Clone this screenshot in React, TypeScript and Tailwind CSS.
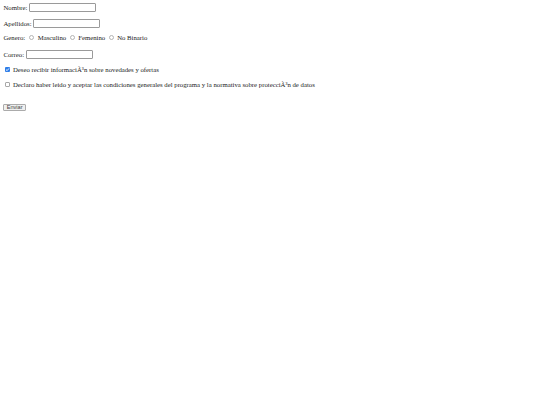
import React from "react";

const serif = { fontFamily: '"Liberation Serif", "Times New Roman", serif' };

function TextField() {
  return (
    <input
      type="text"
      className="h-[9px] w-[67px] rounded-[1px] border border-[#9a9a9a] bg-white px-[1px] outline-none"
    />
  );
}

function Radio() {
  return (
    <span className="mx-[2px] inline-block h-[5px] w-[5px] shrink-0 rounded-full border border-[#b4b4b4] bg-white" />
  );
}

function Check({ checked }: { checked?: boolean }) {
  if (checked) {
    return (
      <span className="ml-[2px] mr-[2.5px] flex h-[5px] w-[5px] shrink-0 items-center justify-center rounded-[1px] bg-[#2f7ee8]">
        <svg viewBox="0 0 10 10" className="h-[5px] w-[5px]">
          <path d="M2 5.2 L4.2 7.3 L8 2.8" fill="none" stroke="#fff" strokeWidth="1.8" />
        </svg>
      </span>
    );
  }
  return (
    <span className="ml-[2px] mr-[2.5px] inline-block h-[5px] w-[5px] shrink-0 rounded-[1px] border border-[#a8a8a8] bg-white" />
  );
}

export default function App() {
  return (
    <div
      className="flex min-h-[405px] w-[540px] flex-col bg-white px-[3.4px] pt-[3px] text-[6.75px] leading-[9px] text-[#222]"
      style={serif}
    >
      <div className="flex h-[9px] items-center gap-[1.8px]">
        <span>Nombre:</span>
        <TextField />
      </div>
      <div className="mt-[7px] flex h-[9px] items-center gap-[1.8px]">
        <span>Apellidos:</span>
        <TextField />
      </div>
      <div className="mt-[5px] flex h-[9px] items-center">
        <span className="mr-[2px]">Genero:</span>
        <Radio />
        <span className="mx-[1.5px]">Masculino</span>
        <Radio />
        <span className="mx-[1.5px]">Femenino</span>
        <Radio />
        <span className="mx-[1.5px]">No Binario</span>
      </div>
      <div className="mt-[7.5px] flex h-[9px] items-center gap-[1.8px]">
        <span>Correo:</span>
        <TextField />
      </div>
      <div className="mt-[6px] flex h-[9px] items-center">
        <Check checked />
        <span>Deseo recibir informaciÃ³n sobre novedades y ofertas</span>
      </div>
      <div className="mt-[6.5px] flex h-[9px] items-center">
        <Check />
        <span>
          Declaro haber leido y aceptar las condiciones generales del programa y la normativa sobre protecciÃ³n de datos
        </span>
      </div>
      <div className="mt-[14px] flex h-[9px] items-center">
        <button
          type="button"
          className="flex h-[7.5px] w-[22.5px] items-center justify-center rounded-[1px] border border-[#ababab] bg-[#efefef] text-[5.6px] leading-none text-[#444]"
          style={{ fontFamily: '"Liberation Sans", Arial, sans-serif' }}
        >
          Enviar
        </button>
      </div>
    </div>
  );
}
